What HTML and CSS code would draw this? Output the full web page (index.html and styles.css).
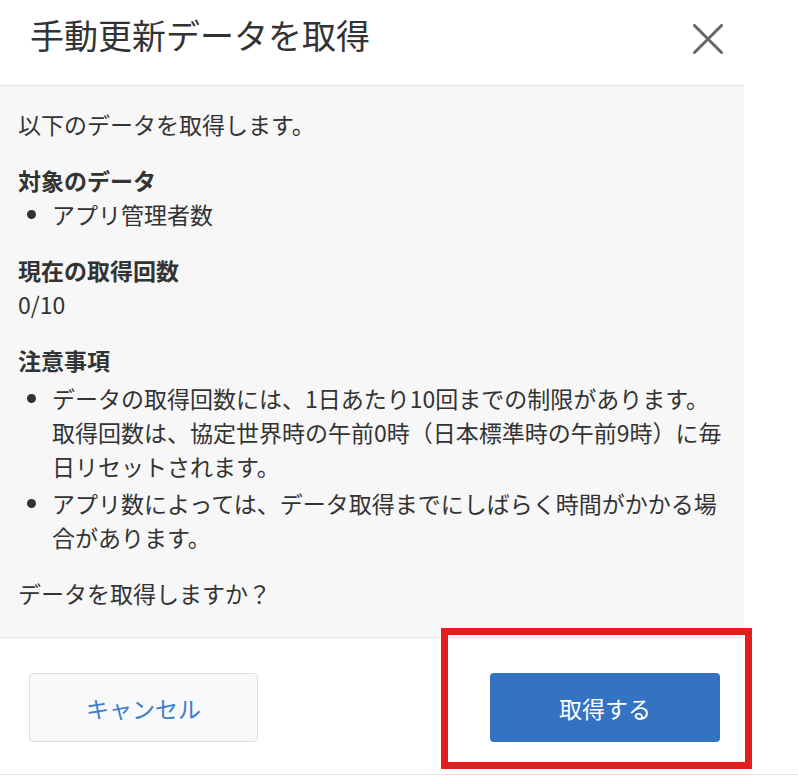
FILE: index.html
```html
<!DOCTYPE html>
<html lang="ja">
<head>
<meta charset="utf-8">
<title>手動更新データを取得</title>
<link rel="stylesheet" href="styles.css">
</head>
<body>
<div class="page">
  <div class="dialog">
    <div class="dialog-header">
      <h1 class="dialog-title">手動更新データを取得</h1>
      <button class="close-btn" aria-label="閉じる">
        <svg width="30" height="30" viewBox="0 0 30 30"><path d="M1.5 1.5 L28.5 28.5 M28.5 1.5 L1.5 28.5" stroke="#666" stroke-width="3" stroke-linecap="round" fill="none"/></svg>
      </button>
    </div>
    <div class="dialog-body">
      <p class="block">以下のデータを取得します。</p>
      <div class="block">
        <div class="label">対象のデータ</div>
        <ul class="list">
          <li>アプリ管理者数</li>
        </ul>
      </div>
      <div class="block">
        <div class="label">現在の取得回数</div>
        <div>0/10</div>
      </div>
      <div class="block">
        <div class="label">注意事項</div>
        <ul class="list notes">
          <li>データの取得回数には、1日あたり10回までの制限があります。<br>取得回数は、協定世界時の午前0時（日本標準時の午前9時）に毎日リセットされます。</li>
          <li>アプリ数によっては、データ取得までにしばらく時間がかかる場合があります。</li>
        </ul>
      </div>
      <p class="block">データを取得しますか？</p>
    </div>
    <div class="dialog-footer">
      <button class="btn btn-cancel">キャンセル</button>
      <button class="btn btn-primary">取得する</button>
      <div class="highlight"></div>
    </div>
  </div>
  <div class="bottom-rule"></div>
</div>
</body>
</html>
```

FILE: styles.css
```css
html, body {
  margin: 0;
  padding: 0;
  background: #ffffff;
}

body {
  font-family: "Noto Sans CJK JP", "Noto Sans", sans-serif;
  color: #333333;
}

.page {
  width: 798px;
}

.dialog {
  width: 744px;
  background: #ffffff;
}

.dialog-header {
  height: 85px;
  border-bottom: 1px solid #e6e6e6;
  display: flex;
  justify-content: space-between;
  align-items: flex-start;
  padding: 0 21px 0 30px;
}

.dialog-title {
  margin: 18px 0 0;
  font-size: 34px;
  line-height: 34px;
  font-weight: normal;
  color: #333333;
}

.close-btn {
  margin-top: 24px;
  padding: 0;
  border: none;
  background: none;
  width: 30px;
  height: 30px;
  display: block;
}

.close-btn svg {
  display: block;
}

.dialog-body {
  background: #f7f7f7;
  padding: 21px 18px 27px;
  font-size: 23px;
  line-height: 34px;
}

.block {
  margin: 0 0 22px;
}

.block:last-child {
  margin-bottom: 0;
}

.label {
  font-weight: bold;
}

.list {
  margin: 0;
  padding-left: 34px;
}

.notes {
  margin-top: 4px;
}

.notes li + li {
  margin-top: 3px;
}

.dialog-footer {
  position: relative;
  border-top: 1px solid #e6e6e6;
  display: flex;
  justify-content: space-between;
  padding: 35px 24px 32px 29px;
}

.btn {
  height: 69px;
  width: 230px;
  border-radius: 4px;
  font-family: "Noto Sans CJK JP", "Noto Sans", sans-serif;
  font-size: 23px;
  padding: 0;
}

.btn-cancel {
  width: 229px;
  background: #f7f9fa;
  border: 1px solid #dcdfe0;
  color: #3d7dcb;
}

.btn-primary {
  background: #3473c3;
  border: none;
  color: #ffffff;
}

.highlight {
  position: absolute;
  left: 441px;
  top: -10px;
  width: 311px;
  height: 141px;
  box-sizing: border-box;
  border: 7px solid #e41d1f;
}

.bottom-rule {
  height: 1px;
  background: #e6e6e6;
}
```
